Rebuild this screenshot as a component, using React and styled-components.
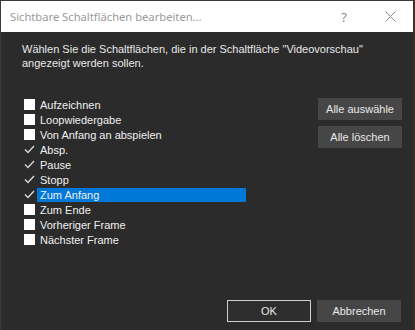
import React from 'react';
import styled, { createGlobalStyle } from 'styled-components';

const GlobalStyle = createGlobalStyle`
  html, body {
    margin: 0;
    padding: 0;
    background: #3b3128;
  }
  * { box-sizing: border-box; }
`;

const Window = styled.div`
  width: 413px;
  height: 330px;
  display: flex;
  flex-direction: column;
  background: #2b2b2b;
  border-left: 1px solid #3a3a3a;
  border-top: 1px solid #3a3a3a;
  font-family: "Liberation Sans", Arial, sans-serif;
  color: #e8e8e8;
`;

const TitleBar = styled.div`
  height: 31px;
  flex: none;
  display: flex;
  align-items: center;
  background: #ffffff;
  padding-left: 9px;
`;

const Title = styled.div`
  flex: 1;
  font-family: "Noto Sans", "Open Sans", sans-serif;
  font-size: 11.2px;
  color: #9a9a9a;
  padding-bottom: 1px;
`;

const TitleButton = styled.div`
  width: 46px;
  height: 30px;
  display: flex;
  align-items: center;
  justify-content: center;
  font-family: "Noto Sans", sans-serif;
  font-size: 13px;
  color: #8a8a8a;
`;

const Body = styled.div`
  flex: 1;
  display: flex;
  flex-direction: column;
  padding: 10px 11px 8px 21px;
`;

const Prompt = styled.p`
  margin: 0;
  font-size: 11px;
  line-height: 14px;
  color: #e8e8e8;
`;

const Main = styled.div`
  flex: 1;
  display: flex;
  justify-content: space-between;
  align-items: flex-start;
  margin-top: 27px;
`;

const List = styled.div`
  display: flex;
  flex-direction: column;
  padding-left: 2px;
`;

const Row = styled.div`
  height: 15px;
  display: flex;
  align-items: center;
`;

const Box = styled.span`
  width: 11px;
  height: 11px;
  flex: none;
  display: flex;
  align-items: center;
  justify-content: center;
  background: ${({ $checked }) => ($checked ? 'transparent' : '#ffffff')};
`;

const Label = styled.span`
  margin-left: 2px;
  width: 209px;
  height: 14px;
  line-height: 14px;
  padding-left: 3px;
  font-size: 11px;
  color: #f0f0f0;
  background: ${({ $selected }) => ($selected ? '#0078d7' : 'transparent')};
`;

const Side = styled.div`
  display: flex;
  flex-direction: column;
  gap: 6px;
  margin-top: 1px;
`;

const Button = styled.button`
  width: 84px;
  height: 22px;
  padding: 0;
  font-family: "Liberation Sans", Arial, sans-serif;
  font-size: 11px;
  color: #e8e8e8;
  background: ${({ $primary }) => ($primary ? '#2e2e2e' : '#464646')};
  border: 1px solid ${({ $primary }) => ($primary ? '#d0d0d0' : '#464646')};
`;

const Footer = styled.div`
  display: flex;
  justify-content: flex-end;
  gap: 6px;
  padding-right: 1px;
`;

const Check = () => (
  <svg width="11" height="11" viewBox="0 0 11 11">
    <polyline points="1,5.5 4,8.5 10,2" fill="none" stroke="#d8d8d8" strokeWidth="1.4" />
  </svg>
);

const items = [
  ['Aufzeichnen', false],
  ['Loopwiedergabe', false],
  ['Von Anfang an abspielen', false],
  ['Absp.', true],
  ['Pause', true],
  ['Stopp', true],
  ['Zum Anfang', true],
  ['Zum Ende', false],
  ['Vorheriger Frame', false],
  ['Nächster Frame', false],
];

export default function App() {
  return (
    <>
      <GlobalStyle />
      <Window>
        <TitleBar>
          <Title>Sichtbare Schaltflächen bearbeiten...</Title>
          <TitleButton>?</TitleButton>
          <TitleButton>
            <svg width="11" height="11" viewBox="0 0 11 11">
              <path d="M0.5 0.5 L10.5 10.5 M10.5 0.5 L0.5 10.5" stroke="#8a8a8a" strokeWidth="1" />
            </svg>
          </TitleButton>
        </TitleBar>
        <Body>
          <Prompt>
            Wählen Sie die Schaltflächen, die in der Schaltfläche "Videovorschau"
            <br />
            angezeigt werden sollen.
          </Prompt>
          <Main>
            <List>
              {items.map(([name, checked]) => (
                <Row key={name}>
                  <Box $checked={checked}>{checked && <Check />}</Box>
                  <Label $selected={name === 'Zum Anfang'}>{name}</Label>
                </Row>
              ))}
            </List>
            <Side>
              <Button>Alle auswähle</Button>
              <Button>Alle löschen</Button>
            </Side>
          </Main>
          <Footer>
            <Button $primary>OK</Button>
            <Button>Abbrechen</Button>
          </Footer>
        </Body>
      </Window>
    </>
  );
}
